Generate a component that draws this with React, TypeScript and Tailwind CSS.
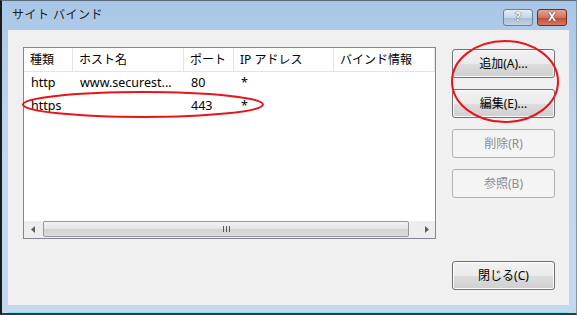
import React from "react";

const font = { fontFamily: '"Noto Sans", "Noto Sans CJK JP", sans-serif' };

function Btn({ label, disabled }: { label: string; disabled?: boolean }) {
  return disabled ? (
    <div className="h-[29px] w-[103px] rounded-[3px] border border-[#adb2b5] bg-[#f4f4f4] flex items-center justify-center text-[12px] text-[#8d8d8d]">
      {label}
    </div>
  ) : (
    <div className="h-[29px] w-[103px] rounded-[3px] border border-[#707070] bg-[linear-gradient(#f2f2f2_0%,#ebebeb_50%,#dddddd_51%,#cfcfcf_100%)] shadow-[inset_0_0_0_1px_#fbfbfb] flex items-center justify-center text-[12px] text-black">
      {label}
    </div>
  );
}

export default function App() {
  const cols = [
    { t: "種類", w: 49 },
    { t: "ホスト名", w: 111 },
    { t: "ポート", w: 50 },
    { t: "IP アドレス", w: 100 },
    { t: "バインド情報", w: 101 },
  ];
  const rows = [
    ["http", "www.securest...", "80", "*", ""],
    ["https", "", "443", "*", ""],
  ];
  return (
    <div
      className="relative w-[577px] h-[315px] overflow-hidden border-t border-t-[#5a6b7c] border-l-2 border-l-[#1b1b1b] border-b-2 border-b-[#2c3b44] border-r border-r-[#7d93a8] bg-[linear-gradient(#a9c6e6,#c0d6ee_40%,#c4d9ef)] flex flex-col"
      style={font}
    >
      {/* title bar */}
      <div className="h-[28px] flex items-center pl-[10px] pr-[9px] shrink-0">
        <span className="text-[12px] text-[#1e1e1e] tracking-[0.5px]">サイト バインド</span>
        <div className="ml-auto flex gap-[4px] mt-[4px]">
          <div className="w-[30px] h-[17px] rounded-[3px] border border-[#6d7f94] bg-[linear-gradient(#e3ecf6,#c6d6e8_50%,#a8bdd5_51%,#c0d2e6)] flex items-center justify-center">
            <span className="text-[12px] font-bold text-white leading-none [text-shadow:0_0_1px_#34455a,0_0_1px_#34455a]">?</span>
          </div>
          <div className="w-[30px] h-[17px] rounded-[3px] border border-[#6b2a22] bg-[linear-gradient(#e8a493,#d2725f_50%,#c04a35_51%,#d67a5f)] flex items-center justify-center">
            <span className="text-[12px] font-bold text-white leading-none [text-shadow:0_0_1px_#4a1810,0_0_1px_#4a1810]">X</span>
          </div>
        </div>
      </div>

      {/* client area */}
      <div className="ml-[6px] mr-[7px] mt-[1px] h-[275px] bg-[#f0f0f0] flex pl-[15px] pt-[17px]">
        {/* list view */}
        <div className="w-[413px] h-[192px] border border-[#828790] bg-white flex flex-col">
          <div className="flex h-[24px] border-b border-[#e5e5e5] shrink-0">
            {cols.map((c) => (
              <div
                key={c.t}
                style={{ width: c.w }}
                className="h-full border-r border-[#e5e5e5] pl-[6px] flex items-center text-[12px] text-black whitespace-nowrap overflow-hidden"
              >
                {c.t}
              </div>
            ))}
          </div>
          <div className="flex-1 flex flex-col">
            {rows.map((r, i) => (
              <div key={i} className="flex h-[23px]">
                {r.map((v, j) => (
                  <div
                    key={j}
                    style={{ width: cols[j].w }}
                    className="h-full pl-[7px] flex items-center text-[12.5px] text-black whitespace-nowrap overflow-hidden"
                  >
                    {v}
                  </div>
                ))}
              </div>
            ))}
          </div>
          {/* horizontal scrollbar */}
          <div className="h-[17px] flex bg-[#ededed] shrink-0">
            <div className="w-[17px] h-full flex items-center justify-center">
              <svg width="4" height="7" viewBox="0 0 4 7">
                <path d="M4 0 L0 3.5 L4 7 Z" fill="#606060" />
              </svg>
            </div>
            <div className="ml-[2px] w-[366px] h-[16px] rounded-[2px] border border-[#979797] bg-[linear-gradient(#f4f4f4,#e6e6e6_45%,#d3d3d3_55%,#dcdcdc)] flex items-center justify-center">
              <div className="flex gap-[2px]">
                <div className="w-[1px] h-[6px] bg-[#5a5a5a]" />
                <div className="w-[1px] h-[6px] bg-[#5a5a5a]" />
                <div className="w-[1px] h-[6px] bg-[#5a5a5a]" />
              </div>
            </div>
            <div className="flex-1" />
            <div className="w-[17px] h-full flex items-center justify-center">
              <svg width="4" height="7" viewBox="0 0 4 7">
                <path d="M0 0 L4 3.5 L0 7 Z" fill="#606060" />
              </svg>
            </div>
          </div>
        </div>

        {/* buttons */}
        <div className="ml-[16px] mt-[2px] flex flex-col">
          <div className="flex flex-col gap-[11px]">
            <Btn label="追加(A)..." />
            <Btn label="編集(E)..." />
            <Btn label="削除(R)" disabled />
            <Btn label="参照(B)" disabled />
          </div>
          <div className="mt-[63px]">
            <Btn label="閉じる(C)" />
          </div>
        </div>
      </div>
      <div className="ml-[6px] mr-[7px] mt-auto h-[1px] bg-[#7fe3f5]" />

      {/* red annotation ellipses */}
      <svg className="absolute left-[-2px] top-[-1px] pointer-events-none" width="577" height="315">
        <ellipse cx="143" cy="104.5" rx="120" ry="12.5" fill="none" stroke="#e8141b" strokeWidth="2" />
        <ellipse cx="505" cy="81.5" rx="53" ry="40.5" fill="none" stroke="#e8141b" strokeWidth="2" />
      </svg>
    </div>
  );
}
